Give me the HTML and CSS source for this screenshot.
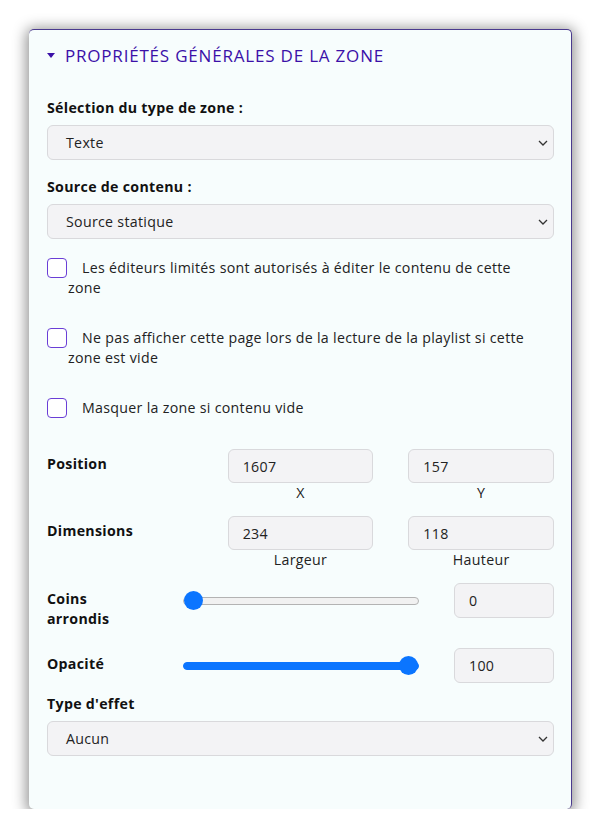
FILE: index.html
```html
<!DOCTYPE html>
<html lang="fr">
<head>
<meta charset="utf-8">
<title>Propriétés de la zone</title>
<link rel="stylesheet" href="styles.css">
</head>
<body>
<div class="card">
  <div class="section-title"><span class="caret"></span>PROPRIÉTÉS GÉNÉRALES DE LA ZONE</div>

  <div class="field first">
    <div class="label">Sélection du type de zone :</div>
    <div class="select"><span>Texte</span><svg class="chev" viewBox="0 0 10 6" width="10" height="6"><path d="M1 1l4 4 4-4" fill="none" stroke="#333" stroke-width="1.3"/></svg></div>
  </div>

  <div class="field">
    <div class="label">Source de contenu :</div>
    <div class="select"><span>Source statique</span><svg class="chev" viewBox="0 0 10 6" width="10" height="6"><path d="M1 1l4 4 4-4" fill="none" stroke="#333" stroke-width="1.3"/></svg></div>
  </div>

  <div class="checks">
    <div class="check"><span class="box"></span>Les éditeurs limités sont autorisés à éditer le contenu de cette zone</div>
    <div class="check"><span class="box"></span>Ne pas afficher cette page lors de la lecture de la playlist si cette zone est vide</div>
    <div class="check"><span class="box"></span>Masquer la zone si contenu vide</div>
  </div>

  <div class="grid3">
    <div class="label rowlabel">Position</div>
    <div class="cell"><div class="input">1607</div><div class="sub">X</div></div>
    <div class="cell"><div class="input">157</div><div class="sub">Y</div></div>

    <div class="label rowlabel">Dimensions</div>
    <div class="cell"><div class="input">234</div><div class="sub">Largeur</div></div>
    <div class="cell"><div class="input">118</div><div class="sub">Hauteur</div></div>
  </div>

  <div class="sliders">
    <div class="label slabel">Coins arrondis</div>
    <input class="range" type="range" min="0" max="100" value="0">
    <div class="input num">0</div>

    <div class="label slabel">Opacité</div>
    <input class="range full" type="range" min="0" max="100" value="100">
    <div class="input num">100</div>
  </div>

  <div class="field last">
    <div class="label">Type d'effet</div>
    <div class="select"><span>Aucun</span><svg class="chev" viewBox="0 0 10 6" width="10" height="6"><path d="M1 1l4 4 4-4" fill="none" stroke="#333" stroke-width="1.3"/></svg></div>
  </div>
</div>
</body>
</html>
```
FILE: styles.css
```css
html, body {
  margin: 0;
  padding: 0;
  background: #ffffff;
}
body {
  font-family: "Open Sans", "DejaVu Sans", sans-serif;
  font-size: 14.2px;
  letter-spacing: 0.3px;
  color: #222;
  padding: 29px 0 0 29px;
}
.card {
  box-sizing: border-box;
  width: 543px;
  height: 780px;
  background: #f7fdfd;
  border-top: 1px solid #4a3a8e;
  border-right: 1.5px solid #4a3a8e;
  border-radius: 5px;
  box-shadow: 0 2px 14px 3px rgba(0, 0, 0, 0.42);
  padding: 15px 17px 0 18px;
}
.section-title {
  display: flex;
  align-items: center;
  height: 20px;
  color: #3b10a8;
  font-size: 17px;
  letter-spacing: 0.8px;
}
.caret {
  width: 0;
  height: 0;
  border-left: 4px solid transparent;
  border-right: 4px solid transparent;
  border-top: 5px solid #3b10a8;
  margin-right: 10px;
}
.label {
  font-weight: 700;
  color: #111;
  line-height: 20px;
}
.field {
  display: flex;
  flex-direction: column;
  gap: 7px;
  margin-top: 17px;
}
.field.first { margin-top: 33px; }
.field.last { margin-top: 11px; }
.select {
  box-sizing: border-box;
  height: 35px;
  display: flex;
  align-items: center;
  justify-content: space-between;
  background: #f3f3f5;
  border: 1px solid #d9d9dc;
  border-radius: 6px;
  padding: 0 5px 0 18px;
  color: #222;
}
.checks {
  margin-top: 19px;
  display: flex;
  flex-direction: column;
  gap: 30px;
  padding-right: 24px;
}
.check {
  line-height: 20px;
  padding-left: 21px;
  color: #222;
}
.box {
  box-sizing: border-box;
  float: left;
  width: 20px;
  height: 20px;
  margin-left: -21px;
  margin-right: 15px;
  border: 1.5px solid #6a3ed6;
  border-radius: 4px;
  background: #fff;
}
.grid3 {
  margin-top: 31px;
  display: grid;
  grid-template-columns: 1fr 1fr 1fr;
  column-gap: 35px;
  row-gap: 13px;
}
.rowlabel { padding-top: 5px; }
.cell {
  display: flex;
  flex-direction: column;
}
.input {
  box-sizing: border-box;
  height: 34px;
  display: flex;
  align-items: center;
  background: #f3f3f5;
  border: 1px solid #d9d9dc;
  border-radius: 6px;
  padding-left: 14px;
  color: #222;
}
.sub {
  text-align: center;
  line-height: 20px;
  color: #222;
}
.sliders {
  margin-top: 13px;
  display: grid;
  grid-template-columns: 101px 1fr 100px;
  grid-auto-rows: 35px;
  column-gap: 35px;
  row-gap: 30px;
  align-items: center;
}
.sliders .num { height: 35px; }
.slabel { align-self: start; padding-top: 6px; max-width: 80px; }
.range {
  -webkit-appearance: none;
  appearance: none;
  margin: 0;
  width: 100%;
  height: 8px;
  border-radius: 4px;
  background: #f1f1f1;
  border: 1px solid #b3b3b3;
  box-sizing: border-box;
}
.range.full {
  background: #0b75ff;
  border-color: #0b75ff;
}
.range::-webkit-slider-thumb {
  -webkit-appearance: none;
  appearance: none;
  width: 19px;
  height: 19px;
  border-radius: 50%;
  background: #0b75ff;
  border: none;
}
```
